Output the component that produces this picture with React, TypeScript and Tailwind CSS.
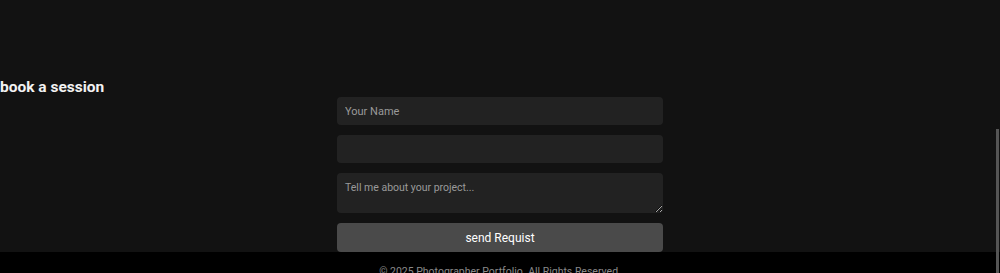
export default function App() {
  return (
    <div className="h-[273px] overflow-hidden bg-[#121212] font-['Roboto',sans-serif]">
      <section className="pt-[77px]">
        <h2 className="text-[15.5px] font-bold leading-[20px] text-[#f2f2f2]">book a session</h2>
        <form className="mx-auto flex w-[326px] flex-col gap-[10px]">
          <input
            type="text"
            placeholder="Your Name"
            className="h-[28px] rounded-[4px] bg-[#222222] px-[8px] pt-[1px] text-[11px] text-white outline-none placeholder:text-[#9a9a9a]"
          />
          <input
            type="email"
            className="h-[28px] rounded-[4px] bg-[#222222] px-[8px] text-[11px] text-white outline-none"
          />
          <textarea
            placeholder="Tell me about your project..."
            className="h-[40px] rounded-[4px] bg-[#222222] px-[8px] pt-[8px] pb-[4px] text-[10.5px] leading-[13px] text-white outline-none placeholder:text-[#9a9a9a]"
          />
          <button
            type="button"
            className="h-[29px] rounded-[4px] bg-[#4a4a4a] pt-[1px] text-[12px] text-white"
          >
            send Requist
          </button>
        </form>
      </section>
      <footer className="bg-black pt-[13px] text-center">
        <p className="text-[10.5px] leading-[13px] text-[#8a8a8a]">
          © 2025 Photographer Portfolio. All Rights Reserved.
        </p>
      </footer>
      <div className="fixed right-[1px] top-[129px] bottom-0 w-[3px] bg-[#555555]" />
    </div>
  );
}
